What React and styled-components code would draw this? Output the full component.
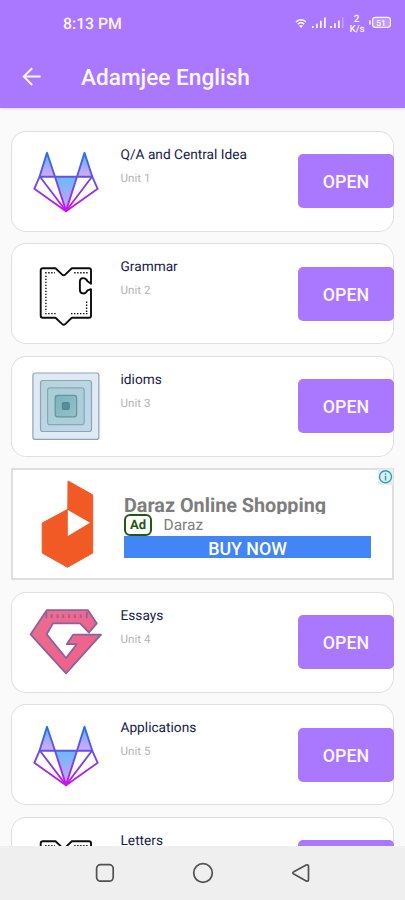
import React from "react";
import styled, { createGlobalStyle } from "styled-components";

const Global = createGlobalStyle`
  * { box-sizing: border-box; }
  body { margin: 0; background: #fafafa; font-family: Roboto, "Liberation Sans", sans-serif; text-rendering: geometricPrecision; }
`;

const Screen = styled.div`
  width: 405px;
  height: 900px;
  display: flex;
  flex-direction: column;
  overflow: hidden;
  background: #fafafa;
`;

const Header = styled.header`
  flex: none;
  height: 108px;
  background: #aa77ff;
  color: #fcf6ff;
  box-shadow: 0 1px 3px rgba(0, 0, 0, 0.12);
`;

const StatusBar = styled.div`
  height: 46px;
  padding: 0 14px 0 63px;
  display: flex;
  align-items: center;
  justify-content: space-between;
`;

const Clock = styled.span`
  margin-top: 1px;
  font-size: 15.8px;
  line-height: 20px;
  font-weight: 500;
`;

const StatusIcons = styled.svg`
  display: block;
  width: 98px;
  height: 30px;
`;

const Toolbar = styled.div`
  height: 62px;
  display: flex;
  align-items: center;
  padding-left: 22px;
`;

const BackArrow = styled.svg`
  display: block;
  width: 20px;
  height: 20px;
  margin-right: 39px;
`;

const Title = styled.h1`
  margin: 1px 0 0;
  font-size: 22.6px;
  line-height: 28px;
  font-weight: 500;
  white-space: nowrap;
`;

const List = styled.main`
  flex: 1;
  min-height: 0;
  overflow: hidden;
  display: flex;
  flex-direction: column;
  gap: 11.5px;
  padding: 22.6px 11px 0;
`;

const Card = styled.section`
  flex: none;
  height: 101px;
  display: flex;
  align-items: center;
  background: #fff;
  border-radius: 15px;
  box-shadow: inset 0 0 0 1px #dfdfdf;
`;

const Picture = styled.svg`
  display: block;
  flex: none;
  width: 80px;
  height: 80px;
  margin: 0 14.5px 0 15px;
`;

const Details = styled.div`
  flex: 1;
  align-self: stretch;
  padding-top: 15.4px;
`;

const Name = styled.div`
  font-size: 13.7px;
  line-height: 18px;
  color: #171a48;
  white-space: nowrap;
`;

const Unit = styled.div`
  margin-top: 6px;
  font-size: 11.6px;
  line-height: 16px;
  color: #b4b4b4;
`;

const OpenButton = styled.button`
  flex: none;
  width: 96px;
  height: 54px;
  margin: 0;
  padding: 1px 0 0;
  border: 0;
  border-radius: 5px;
  background: #aa77ff;
  color: #fcf6ff;
  font: 500 17.8px Roboto, sans-serif;
`;

const AdBox = styled.section`
  flex: none;
  position: relative;
  height: 112px;
  display: flex;
  background: #fff;
  border: 2px solid #dfdfdf;
`;

const AdLogo = styled.svg`
  display: block;
  width: 80px;
  height: 100px;
  margin: 4px 16px 0 15px;
`;

const AdBody = styled.div`
  width: 247px;
  padding-top: 22.5px;
`;

const AdTitle = styled.div`
  height: 21px;
  overflow: hidden;
  color: #7d7d7d;
  font-size: 19.8px;
  line-height: 26px;
  font-weight: 700;
  white-space: nowrap;
`;

const AdSource = styled.div`
  height: 22px;
  display: flex;
  align-items: center;
  gap: 11.5px;
  color: #808080;
  font-size: 15.5px;
`;

const AdBadge = styled.span`
  width: 28px;
  height: 22px;
  border: 2px solid #1f5a12;
  border-radius: 6px;
  color: #1f5a12;
  font-size: 13px;
  line-height: 19px;
  font-weight: 700;
  text-align: center;
`;

const BuyButton = styled.button`
  display: block;
  width: 247px;
  height: 22px;
  border: 0;
  margin: 0;
  padding: 2px 0 0;
  background: #4285f4;
  color: #fff;
  font: 500 17.8px/22px Roboto, sans-serif;
`;

const AdInfo = styled.svg`
  position: absolute;
  top: -1px;
  right: -1px;
  width: 15px;
  height: 16px;
`;

const NavBar = styled.nav`
  flex: none;
  height: 54px;
  display: flex;
  justify-content: center;
  align-items: center;
  gap: 76px;
  background: #efefef;
`;

const NavIcon = styled.svg`
  display: block;
  width: 22px;
  height: 22px;
  fill: none;
  stroke: #505050;
  stroke-width: 1.7;
`;

function Fox({ id }) {
  const s = `${id}-stroke`;
  const f = `${id}-fill`;
  const e = `${id}-ear`;
  return (
    <Picture viewBox="0 0 80 80">
      <defs>
        <linearGradient id={s} gradientUnits="userSpaceOnUse" x1="0" y1="11" x2="0" y2="70">
          <stop offset="0" stopColor="#1f70f2" />
          <stop offset="0.45" stopColor="#6650e6" />
          <stop offset="1" stopColor="#cc10ee" />
        </linearGradient>
        <linearGradient id={f} gradientUnits="userSpaceOnUse" x1="0" y1="36" x2="0" y2="66">
          <stop offset="0" stopColor="#69b9fc" />
          <stop offset="1" stopColor="#c8a4f8" />
        </linearGradient>
        <linearGradient id={e} gradientUnits="userSpaceOnUse" x1="0" y1="11" x2="0" y2="36">
          <stop offset="0" stopColor="#62b0fb" />
          <stop offset="1" stopColor="#d8a9f5" />
        </linearGradient>
      </defs>
      <g stroke={`url(#${s})`} strokeWidth="1.9" strokeLinejoin="round" fill="none">
        <path d="M21 11.8 13.5 35.8H29ZM58.5 11.8 51 35.8H66.3Z" fill={`url(#${e})`} />
        <path d="M29 35.8H51L40 70Z" fill={`url(#${f})`} />
        <path d="M13.5 35.8 8.3 47.8 40 70.3 71.7 47.8 66.3 35.8" />
        <path d="M14 35.8 40 70 66 35.8" />
      </g>
    </Picture>
  );
}

function Puzzle() {
  return (
    <Picture viewBox="0 0 80 80" fill="none" stroke="#0c0c0c">
      <path
        d="M17 14.2H29.5L36.2 20.6Q37.7 22 39.2 20.6L45.8 14.2H63Q65 14.2 65 16.2V29.7L61.5 27.3C59.5 22.8 53.9 23.3 53.9 27.5V35.7C53.9 40.3 59.3 40.8 61.5 36.3L65 35.2V61.8Q65 63.8 63 63.8H45.8L39.2 70.1Q37.7 71.5 36.2 70.1L29.5 63.8H16.7Q14.7 63.8 14.7 61.8V16.2Q14.7 14.2 17 14.2"
        strokeWidth="1.9"
        strokeLinejoin="round"
      />
      <path
        d="M19.2 18.8H29M48.2 18.8H62M19.9 21.7V58M19.2 59.6H31M45 59.6H61.5M60.6 47.5V58"
        strokeWidth="1.4"
        strokeDasharray="1.4 1.6"
      />
    </Picture>
  );
}

function Squares() {
  return (
    <Picture viewBox="0 0 80 80" stroke="#8aa5b4" strokeWidth="1.2">
      <defs>
        <linearGradient id="sq-mid" x1="0" y1="0" x2="1" y2="1">
          <stop offset="0" stopColor="#b4d4dc" />
          <stop offset="1" stopColor="#c2d7ec" />
        </linearGradient>
        <linearGradient id="sq-core" x1="0" y1="0" x2="1" y2="1">
          <stop offset="0" stopColor="#79b3bd" />
          <stop offset="1" stopColor="#94c2c8" />
        </linearGradient>
      </defs>
      <rect x="6.9" y="7" width="66" height="66.4" rx="2.5" fill="#e0eaf4" />
      <rect x="14.5" y="14.5" width="51" height="51" rx="2.5" fill="url(#sq-mid)" />
      <rect x="21.6" y="21.9" width="36.6" height="36.8" rx="2.5" fill="#aacfd8" />
      <rect x="29.2" y="29.4" width="21.4" height="21.4" rx="2.5" fill="url(#sq-core)" stroke="#67919d" />
      <rect x="36.4" y="36.6" width="6.8" height="6.8" rx="1.5" fill="#588f9b" stroke="#518592" />
    </Picture>
  );
}

function Gem() {
  return (
    <Picture viewBox="0 0 80 80">
      <defs>
        <linearGradient id="gem-fill" x1="0" y1="0" x2="0.6" y2="1">
          <stop offset="0" stopColor="#e96f8f" />
          <stop offset="1" stopColor="#f0608a" />
        </linearGradient>
      </defs>
      <path
        d="M20.7 8.2H62L70.8 21.4 63 30.5 54 21.4H27L20.7 32.4 40 56 50.7 42.2H40.7L47.3 32.6H75L40 71.3 4.5 32.4Z"
        fill="url(#gem-fill)"
        stroke="#8a629f"
        strokeWidth="1.8"
        strokeLinejoin="round"
      />
      <path d="M20.3 10V16.3M25.7 12.5V16M31.5 12.5V16M37.3 12.5V16M43.1 12.5V16M48.9 12.5V16M54.7 12.5V16M60.8 10V16.3" stroke="#9b5f94" strokeWidth="1.9" />
    </Picture>
  );
}

function Row({ name, unit, children }) {
  return (
    <Card>
      {children}
      <Details>
        <Name>{name}</Name>
        <Unit>{unit}</Unit>
      </Details>
      <OpenButton>OPEN</OpenButton>
    </Card>
  );
}

function Status() {
  return (
    <StatusIcons viewBox="293 8 98 30" fill="#fcf6ff">
      <g fill="none" stroke="#fcf6ff" strokeWidth="1.5">
        <path d="M296 21.9Q301 17.7 306 21.9" />
        <path d="M297.8 24.1Q301 21.2 304.2 24.1" />
      </g>
      <path d="M298.9 25.7Q301 24.1 303.1 25.7L301 28Z" />
      <path d="M312 26h1.7v2H312zM316 23.7h1.7V28H316zM320 20.8h1.7V28H320zM324 17.5h1.8V28H324zM330.2 26h1.7v2h-1.7zM334.1 23.3h1.7V28h-1.7zM338 20.5h1.7V28H338z" />
      <path d="M342 17.5h1.5V28H342z" opacity=".35" />
      <g fontFamily="Roboto, sans-serif" fontWeight="500" textAnchor="middle">
        <text x="356.5" y="21.5" fontSize="10">2</text>
        <text x="357" y="32" fontSize="9.8">K/s</text>
        <text x="381" y="25.6" fontSize="8.5">51</text>
      </g>
      <rect x="372.6" y="17.4" width="17.8" height="10" rx="2.8" fill="#fff" fillOpacity=".25" stroke="#fcf6ff" strokeWidth="1.2" />
      <rect x="369.2" y="20.2" width="1.6" height="4.5" rx=".6" />
    </StatusIcons>
  );
}

export default function App() {
  return (
    <Screen>
      <Global />
      <Header>
        <StatusBar>
          <Clock>8:13 PM</Clock>
          <Status />
        </StatusBar>
        <Toolbar>
          <BackArrow viewBox="0 0 20 20" fill="none" stroke="#fcf6ff" strokeWidth="2">
            <path d="M18.6 9.6H2M10.2 1.2 1.8 9.6 10.2 18" />
          </BackArrow>
          <Title>Adamjee English</Title>
        </Toolbar>
      </Header>
      <List>
        <Row name="Q/A and Central Idea" unit="Unit 1"><Fox id="fox-a" /></Row>
        <Row name="Grammar" unit="Unit 2"><Puzzle /></Row>
        <Row name="idioms" unit="Unit 3"><Squares /></Row>
        <AdBox>
          <AdLogo viewBox="28 474 80 100">
            <path d="M68 481 92.7 494.8V553L67.5 567.3 42.2 553V523L67.8 509.3Z" fill="#f15a24" stroke="#f15a24" strokeLinejoin="round" />
            <path d="M67.8 510 90 522.7 67.8 536Z" fill="#fff" />
          </AdLogo>
          <AdBody>
            <AdTitle>Daraz Online Shopping</AdTitle>
            <AdSource><AdBadge>Ad</AdBadge>Daraz</AdSource>
            <BuyButton>BUY NOW</BuyButton>
          </AdBody>
          <AdInfo viewBox="0 0 15 16">
            <path d="M0 0H15V16H0Z" fill="#e8eef0" />
            <circle cx="7.5" cy="7.8" r="6" fill="none" stroke="#20a6bd" strokeWidth="1.4" />
            <path d="M6.8 4.2h1.5v1.5H6.8zM6.8 6.8h1.5v4.8H6.8z" fill="#20a6bd" />
          </AdInfo>
        </AdBox>
        <Row name="Essays" unit="Unit 4"><Gem /></Row>
        <Row name="Applications" unit="Unit 5"><Fox id="fox-b" /></Row>
        <Row name="Letters" unit="Unit 6"><Puzzle /></Row>
      </List>
      <NavBar>
        <NavIcon viewBox="0 0 22 22"><rect x="2.6" y="2.6" width="16.6" height="16.6" rx="4" /></NavIcon>
        <NavIcon viewBox="0 0 22 22"><circle cx="11" cy="11" r="9.3" /></NavIcon>
        <NavIcon viewBox="0 0 22 22"><path d="M16.2 3 3.8 9.7Q1.8 10.9 3.8 12.1L16.2 18.9Q18.5 19.8 18.5 17.3V4.6Q18.5 2.1 16.2 3Z" /></NavIcon>
      </NavBar>
    </Screen>
  );
}
